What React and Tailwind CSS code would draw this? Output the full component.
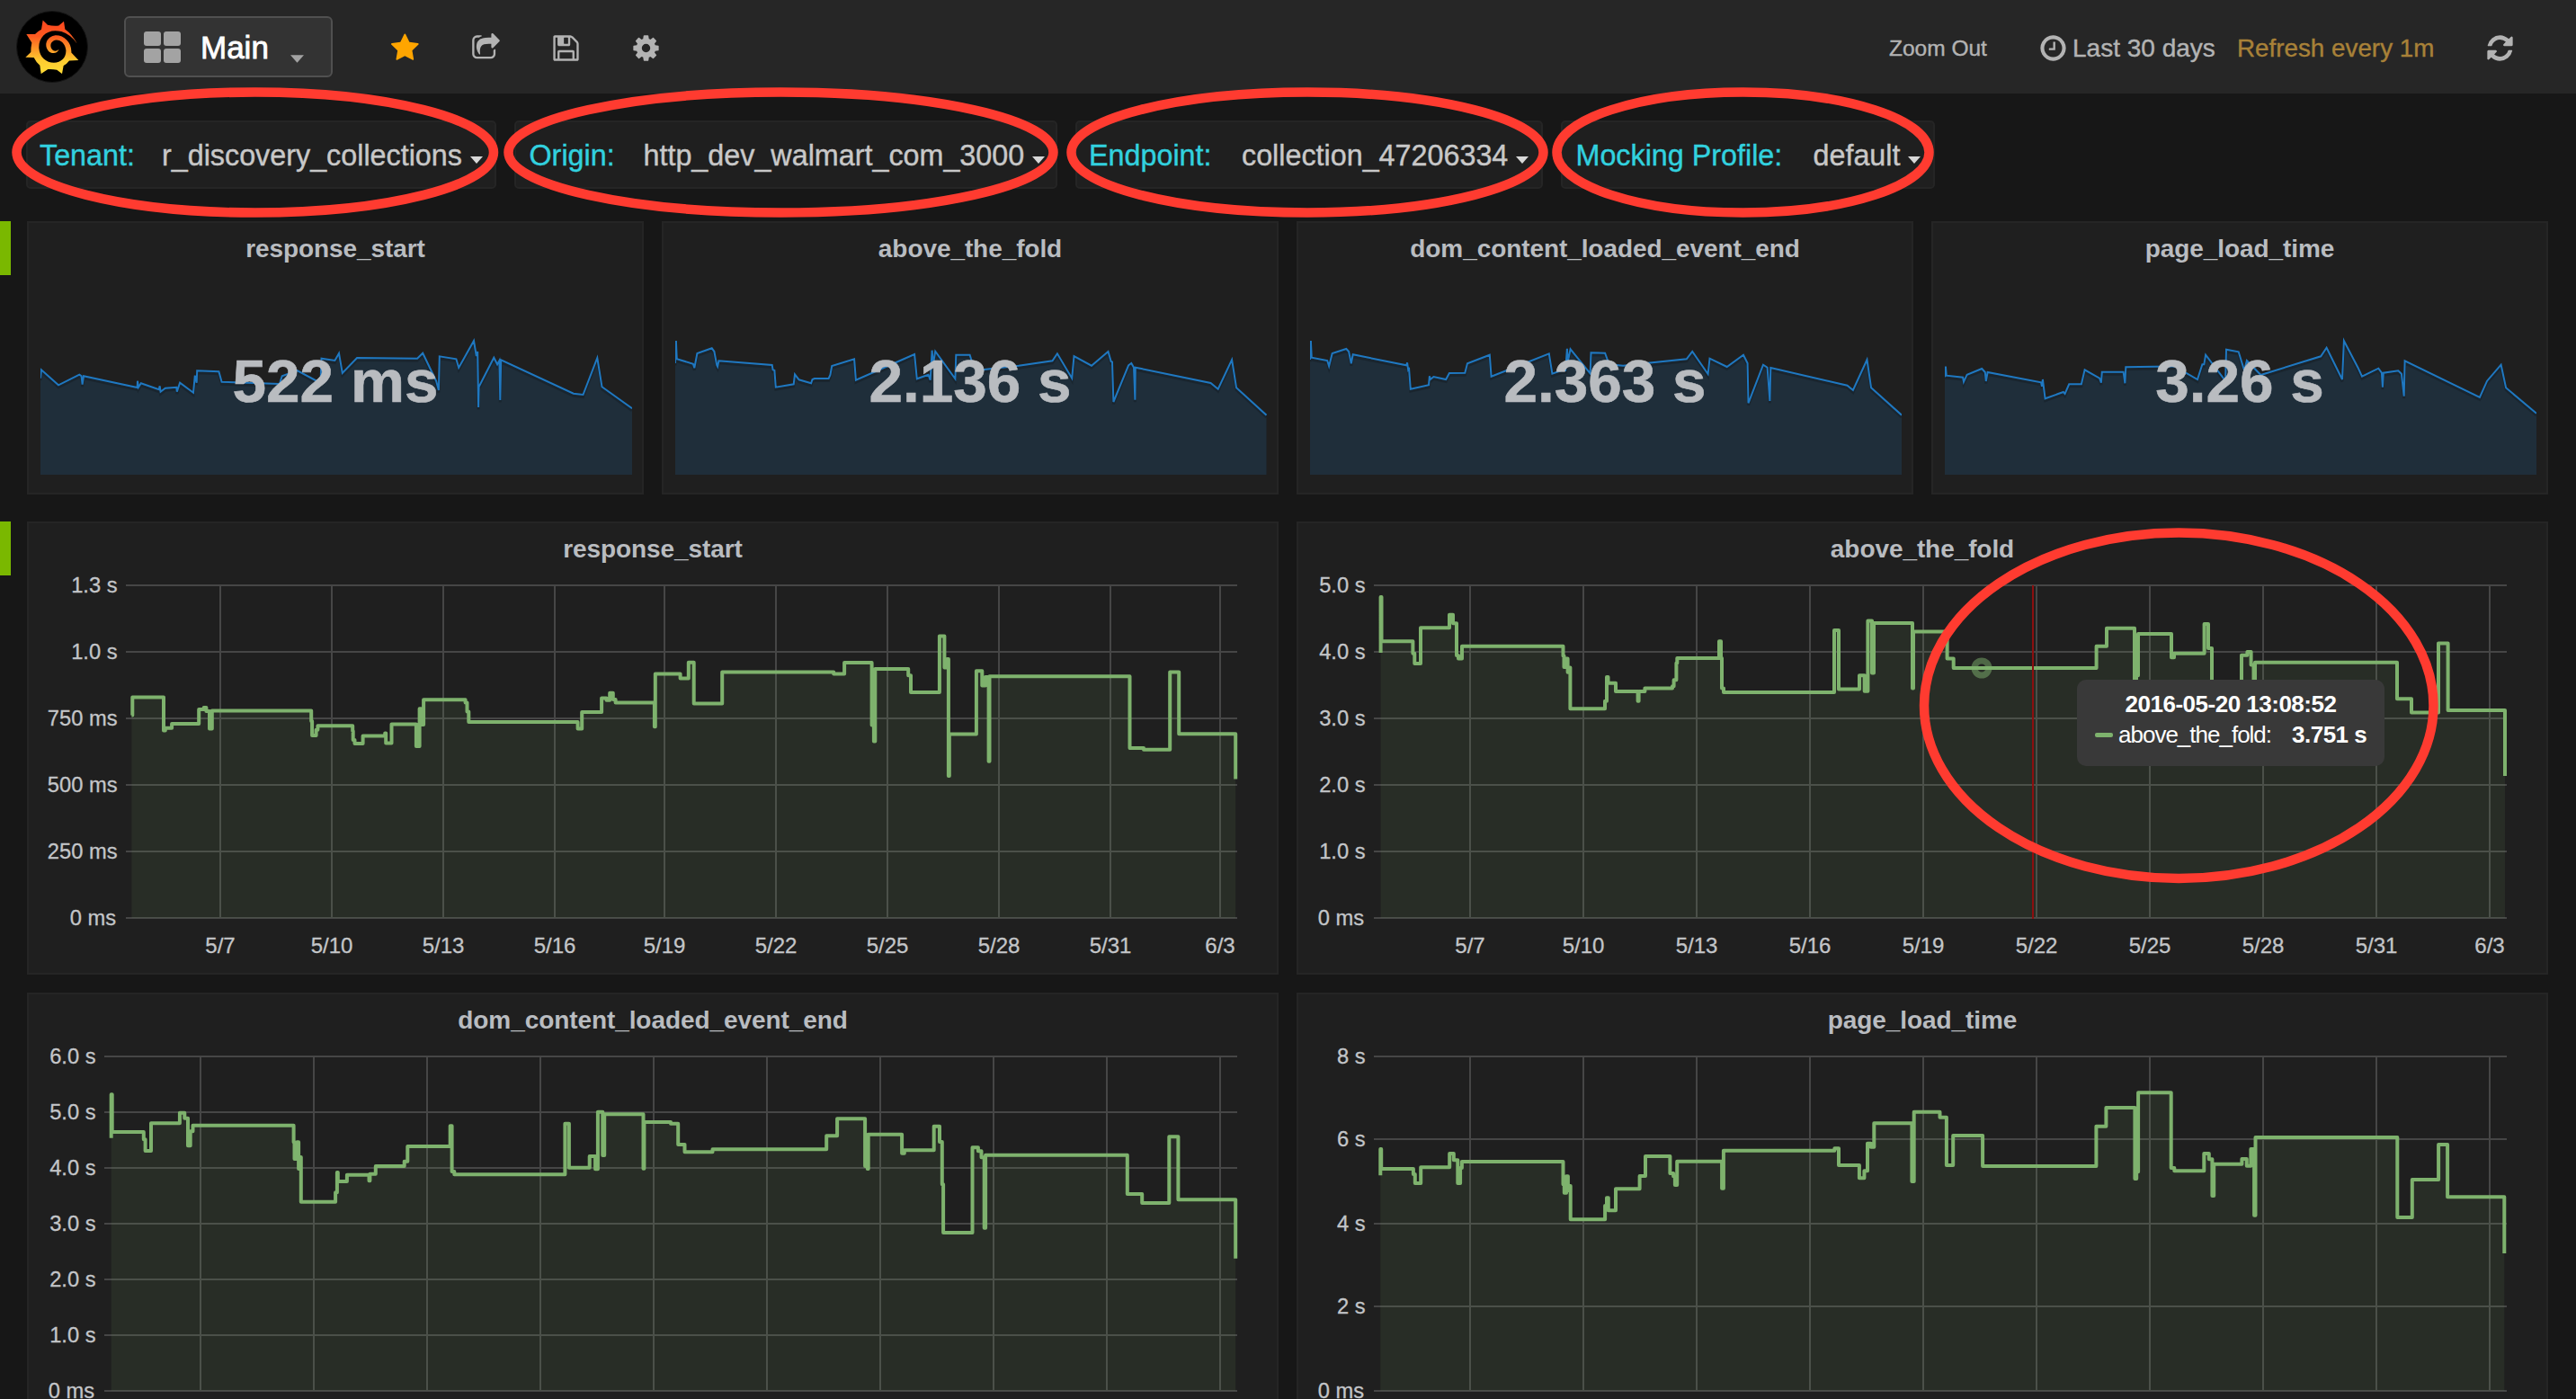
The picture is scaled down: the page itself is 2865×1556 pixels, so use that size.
import React from "react";

const ICONS = {
  star: "M1664 647q0 22-26 48l-363 354 86 500q1 7 1 20 0 21-10.5 35.5t-30.5 14.5q-19 0-40-12l-449-236-449 236q-22 12-40 12-21 0-31.5-14.5t-10.5-35.5q0-6 2-20l86-500-364-354q-25-27-25-48 0-37 56-46l502-73 225-455q19-41 49-41t49 41l225 455 502 73q56 9 56 46z",
  share: "M1472 989v259q0 119-84.5 203.5t-203.5 84.5h-832q-119 0-203.5-84.5t-84.5-203.5v-832q0-119 84.5-203.5t203.5-84.5h255q13 0 22.5 9.5t9.5 22.5q0 27-26 32-77 26-133 60-10 4-16 4h-112q-66 0-113 47t-47 113v832q0 66 47 113t113 47h832q66 0 113-47t47-113v-214q0-19 18-29 28-13 54-37 16-16 35-8 21 9 21 29zm237-496l-384 384q-18 19-45 19-12 0-25-5-39-17-39-59v-192h-160q-323 0-438 131-119 137-74 473 3 23-20 34-8 2-12 2-16 0-26-13-10-14-21-31t-39.5-68.5-49.5-99.5-38.5-114-17.5-122q0-49 3.5-91t14-90 28-88 47-81.5 68.5-74 94.5-61.5 124.5-48.5 159.5-30.5 196.5-11h160v-192q0-42 39-59 13-5 25-5 26 0 45 19l384 384q19 19 19 45t-19 45z",
  save: "M512 1536h768v-384h-768v384zm896 0h128v-896q0-14-10-38.5t-20-34.5l-281-281q-10-10-34-20t-39-10v416q0 40-28 68t-68 28h-576q-40 0-68-28t-28-68v-416h-128v1280h128v-416q0-40 28-68t68-28h832q40 0 68 28t28 68v416zm-384-928v-320q0-13-9.5-22.5t-22.5-9.5h-192q-13 0-22.5 9.5t-9.5 22.5v320q0 13 9.5 22.5t22.5 9.5h192q13 0 22.5-9.5t9.5-22.5zm640 32v928q0 40-28 68t-68 28h-1344q-40 0-68-28t-28-68v-1344q0-40 28-68t68-28h928q40 0 88 20t76 48l280 280q28 28 48 76t20 88z",
  cog: "M1152 896q0-106-75-181t-181-75-181 75-75 181 75 181 181 75 181-75 75-181zm512-109v222q0 12-8 23t-20 13l-185 28q-19 54-39 91 35 50 107 138 10 12 10 25t-9 23q-27 37-99 108t-94 71q-12 0-26-9l-138-108q-44 23-91 38-16 136-29 186-7 28-36 28h-222q-14 0-24.5-8.5t-11.5-21.5l-28-184q-49-16-90-37l-141 107q-10 9-25 9-14 0-25-11-126-114-165-168-7-10-7-23 0-12 8-23 15-21 51-66.5t54-70.5q-27-50-41-99l-183-27q-13-2-21-12.5t-8-23.5v-222q0-12 8-23t19-13l186-28q14-46 39-92-40-57-107-138-10-12-10-24 0-10 9-23 26-36 98.5-107.5t94.5-71.5q13 0 26 10l138 107q44-23 91-38 16-136 29-186 7-28 36-28h222q14 0 24.5 8.5t11.5 21.5l28 184q49 16 90 37l142-107q9-9 24-9 13 0 25 10 129 119 165 170 7 8 7 22 0 12-8 23-15 21-51 66.5t-54 70.5q26 50 41 98l183 28q13 2 21 12.5t8 23.5z",
  clock: "M1024 544v448q0 14-9 23t-23 9h-320q-14 0-23-9t-9-23v-64q0-14 9-23t23-9h224v-352q0-14 9-23t23-9h64q14 0 23 9t9 23zm416 352q0-148-73-273t-198-198-273-73-273 73-198 198-73 273 73 273 198 198 273 73 273-73 198-198 73-273zm224 0q0 209-103 385.5t-279.5 279.5-385.5 103-385.5-103-279.5-279.5-103-385.5 103-385.5 279.5-279.5 385.5-103 385.5 103 279.5 279.5 103 385.5z",
  refresh: "M1639 1056q0 5-1 7-64 268-268 434.5t-478 166.5q-146 0-282.5-55t-243.5-157l-129 129q-19 19-45 19t-45-19-19-45v-448q0-26 19-45t45-19h448q26 0 45 19t19 45-19 45l-137 137q71 66 161 102t187 36q134 0 250-65t186-179q11-17 53-117 8-23 30-23h192q13 0 22.5 9.5t9.5 22.5zm25-800v448q0 26-19 45t-45 19h-448q-26 0-45-19t-19-45 19-45l138-138q-148-137-349-137-134 0-250 65t-186 179q-11 17-53 117-8 23-30 23h-199q-13 0-22.5-9.5t-9.5-22.5v-7q65-268 270-434.5t480-166.5q146 0 284 55.5t245 156.5l130-129q19-19 45-19t45 19 19 45z",
};

function Icon({ name, className = "" }) {
  return (
    <svg viewBox="0 0 1792 1792" fill="currentColor" className={`h-[33px] w-[33px] shrink-0 ${className}`}>
      <path d={ICONS[name]} />
    </svg>
  );
}

function Logo() {
  return (
    <div className="ml-[18px] flex h-[80px] w-[80px] items-center justify-center rounded-full border border-[#151515] bg-black">
      <svg viewBox="84 65 180 181" className="h-[60.5px] w-[60px]">
        <defs>
          <linearGradient id="flame" x1="0" x2="0" y1="0" y2="1">
            <stop offset="0.08" stopColor="#fc4a1f" />
            <stop offset="0.3" stopColor="#fc5a20" />
            <stop offset="0.55" stopColor="#fd9a28" />
            <stop offset="0.75" stopColor="#fdcb30" />
            <stop offset="1" stopColor="#ffdc36" />
          </linearGradient>
        </defs>
        <path
          fill="url(#flame)"
          d="M143 66L159 82Q178 86 196 84L213 70L217 96Q240 112 257 144Q236 114 205 104C160 92 128 120 130 160C132 190 155 208 180 208C205 207 222 190 220 165C218 145 203 131 187 132C170 134 164 152 174 164C180 171 190 170 197 163C192 178 172 180 161 168C146 150 155 122 182 117C212 114 240 140 238 174L262 200L231 201Q224 211 212 218L207 245L190 232Q175 229 160 230L137 245L133 217Q120 206 113 191L85 190L103 173Q103 155 106 141L88 113L117 113Q126 103 138 97Z"
        />
      </svg>
    </div>
  );
}

const parse = (s) => s.trim().split(/\s+/).map((p) => p.split(",").map(Number));

const SPARKS = [
  {
    title: "response_start", value: "522 ms", from: 97, to: 1510,
    data: "97,556 99,528 140,579 190,544 195,549 197,577 200,549 328,587 329,565 331,586 337,573 380,594 382,582 384,601 395,589 422,586 423,601 430,571 462,604 466,547 470,571 471,531 523,534 530,568 668,575 674,549 710,530 766,572 768,490 800,497 810,473 818,539 853,488 997,490 1010,472 1042,565 1048,596 1050,483 1090,492 1096,521 1132,431 1138,482 1141,467 1143,653 1144,585 1180,487 1188,510 1193,497 1195,629 1197,495 1370,607 1393,611 1427,488 1438,585 1510,657",
  },
  {
    title: "above_the_fold", value: "2.136 s", from: 46, to: 1500,
    data: "46,506 48,431 50,492 90,508 93,522 100,473 136,456 142,467 148,512 150,517 153,498 284,512 286,528 290,530 293,586 337,576 340,543 350,561 380,573 383,560 388,557 423,557 427,545 431,515 486,492 490,562 634,476 640,558 668,544 673,562 677,463 680,510 685,466 734,558 736,478 770,478 775,500 800,528 890,514 973,498 985,474 1021,556 1026,482 1069,514 1110,467 1117,500 1120,502 1123,635 1160,513 1167,506 1173,520 1176,628 1177,520 1362,572 1380,592 1414,494 1425,588 1499,679",
  },
  {
    title: "dom_content_loaded_event_end", value: "2.363 s", from: 30, to: 748,
    data: "30,494 31,431 32,487 51,497 53,516 57,473 74,458 77,467 80,507 82,477 147,513 148,504 149,526 150,520 152,592 174,579 175,549 176,560 180,551 195,560 199,539 218,538 221,507 248,478 250,550 320,474 324,541 335,530 340,530 342,457 343,500 346,459 370,540 371,471 388,472 393,510 410,514 440,505 487,492 494,467 513,542 515,490 536,518 556,478 561,506 562,639 580,511 585,520 588,632 589,521 682,580 689,596 706,494 711,588 748,679",
  },
  {
    title: "page_load_time", value: "3.26 s", from: 801, to: 1520,
    data: "801,552 802,517 803,547 823,553 824,568 828,544 846,524 850,536 851,566 853,536 918,570 919,583 920,560 923,624 945,602 947,608 952,576 967,576 971,528 989,556 991,571 992,535 1018,535 1020,573 1021,519 1090,516 1092,535 1108,560 1114,510 1116,510 1118,478 1142,565 1143,460 1158,468 1165,530 1168,497 1185,545 1258,483 1265,454 1284,560 1286,431 1303,520 1308,550 1328,523 1332,538 1333,586 1334,538 1352,531 1356,541 1359,616 1360,498 1451,620 1460,565 1477,511 1483,588 1520,673",
  },
];

const DAYS = ["5/7", "5/10", "5/13", "5/16", "5/19", "5/22", "5/25", "5/28", "5/31", "6/3"];

// Plot geometry is local to the panel; `x`/`y` domains describe the units of `data`.
const CHARTS = {
  response: {
    title: "response_start",
    left: 110, right: 1346, ys: [71, 145, 219, 293, 367, 441],
    labels: ["1.3 s", "1.0 s", "750 ms", "500 ms", "250 ms", "0 ms"],
    ticks: [215, 339, 463, 587, 709, 833, 957, 1081, 1205, 1327],
    x: [154, 1509], y: [264, 1339], days: true,
    data: "161,684 162,626 200,733 202,725 210,711 243,665 249,659 252,671 256,727 259,669 380,703 381,749 386,731 388,718 430.5,735 431,764 433,775 443,751 470,742 471,774 478,713 508,784 512,663 514,714 517,634 568,643 570,672 572,706 705,727 710,674 734,629 740,635 744,612 748,633 751,643 798.5,721 799.5,550 830,565 840,513 846.5,646 881,544 1017,550 1030,514 1063.5,716 1066,768 1067.5,534 1108,555 1111,610 1146,428 1152,530 1155,502 1157,880 1158,745 1191,541 1198,588 1202,560 1206,833 1207,558 1378,790 1395,795 1427,544 1438,744 1507,890",
  },
  fold: {
    title: "above_the_fold",
    left: 86, right: 1346, ys: [71, 145, 219, 293, 367, 441],
    labels: ["5.0 s", "4.0 s", "3.0 s", "2.0 s", "1.0 s", "0 ms"],
    ticks: [193, 319, 445, 571, 697, 823, 949, 1075, 1201, 1327],
    x: [1528, 2788], y: [264, 1339], days: true, hover: true,
    data: "1535.6,482 1535.6,302 1536.5,445 1571.4,484 1573.3,517 1580,401 1612,359 1616,387 1620,491 1622,501 1626,461 1738.5,492 1739.5,528 1742,501 1743.6,545 1745,530 1746.4,663 1785,638 1787,560 1788.5,580 1797,607 1821.6,638 1822.6,607 1829.4,597 1860,590 1861.6,570 1864.4,515 1865.3,499 1912,445 1914,499 1915,597 1917,610 2040,409 2045,600 2068,555 2073.7,606 2077.4,379 2082,547 2084,386 2127,597 2128,414 2165.6,501 2172.7,531 2331.6,461 2343,403 2374,600 2376,555 2378,421 2415,497 2418,484 2451.6,389 2456,467 2460,720 2493,490 2499.4,479 2503.6,521 2506.5,650 2508,513 2666,631 2682,675 2712,451 2722.6,668 2786,880",
  },
  dom: {
    title: "dom_content_loaded_event_end",
    left: 86, right: 1346, ys: [71, 133, 195, 257, 319, 381, 443],
    labels: ["6.0 s", "5.0 s", "4.0 s", "3.0 s", "2.0 s", "1.0 s", "0 ms"],
    ticks: [193, 319, 445, 571, 697, 823, 949, 1075, 1201, 1327],
    x: [127, 1509], y: [255, 1371],
    data: "135.5,527 135.5,382 136.5,507 175,532 177,570 184,478 219,443 225,461 229,553 232,505 235,485 358,541 359,597 362,541 364,630 366,591 367,740 409,709 411,642 412,672 423,650 450,670 451,647 458,621 493,605 497,555 549,487 551,639 554,649 689,479 694,626 719,588 726,631 729,440 735,585 737,448 784.5,629 785.5,474 818,479 827,549 835,574 869,565 1008,520 1021,463 1055,621 1058,630 1059,515 1100,578 1103,568 1139,488 1146,540 1149,682 1150.5,843 1186,559 1193,571 1197,592 1200.5,827 1202,584 1375,714 1393,744 1426,523 1437,733 1507,929",
  },
  load: {
    title: "page_load_time",
    left: 86, right: 1346, ys: [71, 163, 257, 349, 443],
    labels: ["8 s", "6 s", "4 s", "2 s", "0 ms"],
    ticks: [193, 319, 445, 571, 697, 823, 949, 1075, 1201, 1327],
    x: [107, 1484], y: [255, 1371],
    data: "115,652 115,564 116,630 155,648 157,678 164,625 199,579 204,601 209,678 212,627 214,606 337,682 338.5,710 341,655 343,702 344,687 346,799 388,753 390,727 392,769 401,697 430,654 437,588 467,645 471,655 473,684 475.5,605 530,695 532,569 667,562 672,618 697,661 703,637 707,545 711,557 715,478 761,672 763.5,440 795,458 803,618 811,519 847,621 985,488 997,426 1032,663 1034,640 1036,376 1076,627 1080,637 1116,579 1122,598 1126,720 1128,614 1162,597 1168,620 1173,564 1177,785 1178.5,525 1351,792 1369,666 1401,549 1412,724 1481,912",
  },
};

function PanelTitle({ children }) {
  return (
    <h2 className="pt-[13px] text-center text-[28px] leading-[32px] font-bold tracking-[-0.08px] text-[#b9bcc0]">{children}</h2>
  );
}

function Sparkline({ data, from, to }) {
  const pts = parse(data).map(([x, y]) => [((x - from) / (to - from)) * 658, (y - 431) / 3 + 4]);
  const line = "M" + pts.map(([x, y]) => `${x.toFixed(1)} ${y.toFixed(1)}`).join("L");
  return (
    <svg width="658" height="153" className="mt-auto mb-[20px] ml-[13px] block">
      <path d={`${line}V153H0Z`} fill="#1f2e3a" />
      <path d={line} transform="translate(0 2.5)" fill="none" stroke="#000" strokeOpacity="0.18" strokeWidth="3" />
      <path d={line} fill="none" stroke="#1f78c1" strokeWidth="2" />
    </svg>
  );
}

function StatPanel({ title, value, data, from, to }) {
  return (
    <section className="relative flex h-[304px] flex-col border-2 border-[#252525] bg-[#1f1f1f]">
      <PanelTitle>{title}</PanelTitle>
      <Sparkline data={data} from={from} to={to} />
      <div className="absolute inset-x-0 top-[136px] text-center text-[67.5px] leading-[80px] font-bold text-[#b9bcc0] [-webkit-text-stroke:0.6px_#b9bcc0]">
        {value}
      </div>
    </section>
  );
}

function GraphPanel({ chart }) {
  const { title, left, right, ys, labels, ticks } = chart;
  const top = ys[0];
  const bottom = ys[ys.length - 1];
  const sx = (x) => left + ((x - chart.x[0]) / (chart.x[1] - chart.x[0])) * (right - left);
  const sy = (y) => top + ((y - chart.y[0]) / (chart.y[1] - chart.y[0])) * (bottom - top);
  const pts = parse(chart.data).map(([x, y]) => [sx(x).toFixed(1), sy(y).toFixed(1)]);
  const line = `M${pts[0][0]} ${pts[0][1]}` + pts.slice(1).map(([x, y]) => `H${x}V${y}`).join("");
  return (
    <section className="relative h-[504px] border-2 border-[#252525] bg-[#1f1f1f]">
      <PanelTitle>{title}</PanelTitle>
      <svg width="1392" height="504" className="absolute -top-[2px] -left-[2px]">
        <g stroke="#464646" strokeWidth="2">
          {ys.map((y) => <line key={y} x1={left} x2={right} y1={y} y2={y} />)}
          {ticks.map((x) => <line key={x} x1={x} x2={x} y1={top} y2={bottom} />)}
        </g>
        <path d={`${line}V${bottom}H${pts[0][0]}Z`} fill="#7eb26d" fillOpacity="0.1" />
        <path d={line} fill="none" stroke="#7eb26d" strokeWidth="4" strokeLinejoin="round" />
        {chart.hover && (
          <g>
            <line x1="819" x2="819" y1={top} y2={bottom + 1} stroke="#8b0f0f" strokeWidth="2" />
            <circle cx="762" cy="163" r="8" fill="none" stroke="#7eb26d" strokeOpacity="0.5" strokeWidth="7" />
          </g>
        )}
        <g fill="#c3c5c8" stroke="#c3c5c8" strokeWidth="0.3" fontSize="23.7" textAnchor="end">
          {labels.map((l, i) => (
            <text key={l} x={left - (i === labels.length - 1 ? 11 : 9.5)} y={ys[i] + 7.5}>{l}</text>
          ))}
        </g>
        {chart.days && (
          <g fill="#c3c5c8" stroke="#c3c5c8" strokeWidth="0.3" fontSize="24" textAnchor="middle">
            {ticks.map((x, i) => <text key={x} x={x} y="480">{DAYS[i]}</text>)}
          </g>
        )}
      </svg>
      {chart.hover && (
        <div className="absolute top-[174px] left-[866px] h-[96px] w-[342px] rounded-[10px] bg-[#393939] pt-[11px] text-[26px] leading-[33px] text-white">
          <div className="text-center font-bold tracking-[-0.5px]">2016-05-20 13:08:52</div>
          <div className="flex items-center pt-px pl-[20px]">
            <span className="mr-[6px] h-[5px] w-[20px] rounded-[2px] bg-[#7eb26d]" />
            <span className="w-[193px] tracking-[-1px]">above_the_fold:</span>
            <b className="tracking-[-0.5px]">3.751 s</b>
          </div>
        </div>
      )}
    </section>
  );
}

function Caret({ className = "" }) {
  return (
    <svg viewBox="0 0 14 8" className={`h-[8px] w-[14px] ${className}`} fill="currentColor">
      <path d="M0 0H14L7 8Z" />
    </svg>
  );
}

function Variable({ label, value, box, labelWidth }) {
  return (
    <div className={`flex h-[76px] items-center rounded-[5px] border-2 border-[#252525] bg-[#1f1f1f] text-[32.3px] leading-[36px] whitespace-nowrap ${box}`}>
      <span className={`pt-[2px] text-[#32d1df] [-webkit-text-stroke:0.4px_#32d1df] ${labelWidth}`}>{label}</span>
      <span className="pt-[2px] text-[#c8c8c8] [-webkit-text-stroke:0.4px_#c8c8c8]">{value}</span>
      <Caret className="mt-[12px] ml-[9px] shrink-0 text-[#d8d8d8]" />
    </div>
  );
}

// Hand-drawn style highlight rings laid over the page.
const RINGS = [
  [13.5, 97.5, 554, 241.5],
  [560.5, 97.5, 1176.5, 241.5],
  [1186.5, 97.5, 1721.5, 241.5],
  [1726.5, 97.5, 2150.5, 241.5],
  [2135, 587.5, 2711.5, 982],
];

export default function App() {
  return (
    <div className="relative h-[1556px] w-[2865px] overflow-hidden bg-[#171717] font-['Liberation_Sans',Arial,sans-serif]">
      <header className="flex h-[104px] items-center bg-[#262626] text-[#b3b3b3]">
        <Logo />
        <div className="ml-[40px] flex h-[68px] w-[232px] items-center rounded-[6px] border-2 border-[#505050] bg-[#333333] pl-[20px]">
          <div className="grid grid-cols-2 gap-[3px]">
            {[0, 1, 2, 3].map((i) => <i key={i} className="h-[16px] w-[19px] rounded-[3px] bg-[#a3a3a3]" />)}
          </div>
          <span className="ml-[22px] pt-[2px] text-[35px] leading-[40px] text-white [-webkit-text-stroke:0.8px_white]">Main</span>
          <Caret className="mt-[26px] ml-[24px] h-[9px] w-[15px] text-[#a3a3a3]" />
        </div>
        <div className="ml-[65px] flex gap-[56px] pt-[2px] text-[#b3b3b3]">
          <Icon name="star" className="text-[#ffa500]" />
          <Icon name="share" />
          <Icon name="save" />
          <Icon name="cog" />
        </div>
        <div className="mr-[68px] ml-auto flex items-center pt-[2px] text-[28px] leading-[32px] whitespace-nowrap [-webkit-text-stroke:0.4px]">
          <span className="w-[166px] pt-[2px] text-[24.5px]">Zoom Out</span>
          <Icon name="clock" />
          <span className="ml-[5px] w-[183px] pt-[2px]">Last 30 days</span>
          <span className="w-[276px] pt-[2px] text-[27.8px] text-[#a88138]">Refresh every 1m</span>
          <Icon name="refresh" />
        </div>
      </header>

      <nav className="flex gap-[20px] pt-[30px] pl-[29px]">
        <Variable label="Tenant:" value="r_discovery_collections" box="w-[523px] pl-[13px]" labelWidth="w-[136px]" />
        <Variable label="Origin:" value="http_dev_walmart_com_3000" box="w-[604px] pl-[14.5px]" labelWidth="w-[127px]" />
        <Variable label="Endpoint:" value="collection_47206334" box="w-[520px] pl-[13px]" labelWidth="w-[170px]" />
        <Variable label="Mocking Profile:" value="default" box="w-[416px] pl-[14.5px]" labelWidth="w-[264px]" />
      </nav>

      <main className="flex flex-col gap-[30px] pt-[36px]">
        <div className="flex">
          <div className="mr-[18px] h-[60px] w-[12px] bg-[#7ab800]" />
          <div className="grid w-[2804px] grid-cols-4 gap-[20px]">
            {SPARKS.map((s) => <StatPanel key={s.title} {...s} />)}
          </div>
        </div>
        <div className="flex">
          <div className="mr-[18px] h-[60px] w-[12px] bg-[#7ab800]" />
          <div className="grid w-[2804px] grid-cols-2 gap-[20px]">
            <GraphPanel chart={CHARTS.response} />
            <GraphPanel chart={CHARTS.fold} />
            <GraphPanel chart={CHARTS.dom} />
            <GraphPanel chart={CHARTS.load} />
          </div>
        </div>
      </main>

      <svg width="2865" height="1556" className="pointer-events-none absolute inset-0">
        {RINGS.map(([x1, y1, x2, y2]) => (
          <ellipse key={x1} cx={(x1 + x2) / 2} cy={(y1 + y2) / 2} rx={(x2 - x1) / 2 - 5} ry={(y2 - y1) / 2 - 5}
            fill="none" stroke="#ff3b30" strokeWidth="10.5" />
        ))}
      </svg>
    </div>
  );
}
